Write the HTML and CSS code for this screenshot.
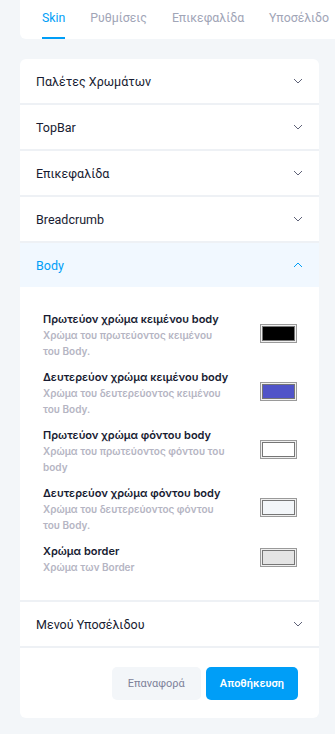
FILE: index.html
```html
<html>
<head>
    <meta charset="utf-8">
    <link rel="stylesheet" href="styles.css">
</head>
<body>
    <div class="tabs">
        <a class="tab active">Skin</a>
        <a class="tab">Ρυθμίσεις</a>
        <a class="tab">Επικεφαλίδα</a>
        <a class="tab">Υποσέλιδο</a>
    </div>

    <div class="panel">
        <div class="accItem">
            <div class="accHead">
                <span>Παλέτες Χρωμάτων</span>
                <svg class="chevron" width="10" height="6" viewBox="0 0 10 6"><path d="M1 1l4 4 4-4" fill="none" stroke="currentColor" stroke-width="1"/></svg>
            </div>
        </div>
        <div class="accItem">
            <div class="accHead">
                <span>TopBar</span>
                <svg class="chevron" width="10" height="6" viewBox="0 0 10 6"><path d="M1 1l4 4 4-4" fill="none" stroke="currentColor" stroke-width="1"/></svg>
            </div>
        </div>
        <div class="accItem">
            <div class="accHead">
                <span>Επικεφαλίδα</span>
                <svg class="chevron" width="10" height="6" viewBox="0 0 10 6"><path d="M1 1l4 4 4-4" fill="none" stroke="currentColor" stroke-width="1"/></svg>
            </div>
        </div>
        <div class="accItem">
            <div class="accHead">
                <span>Breadcrumb</span>
                <svg class="chevron" width="10" height="6" viewBox="0 0 10 6"><path d="M1 1l4 4 4-4" fill="none" stroke="currentColor" stroke-width="1"/></svg>
            </div>
        </div>
        <div class="accItem">
            <div class="accHead open">
                <span>Body</span>
                <svg class="chevron" width="10" height="6" viewBox="0 0 10 6"><path d="M1 5l4-4 4 4" fill="none" stroke="currentColor" stroke-width="1"/></svg>
            </div>
            <div class="accBody">
                <div class="colorRow">
                    <div class="colorText">
                        <div class="colorName">Πρωτεύον χρώμα κειμένου body</div>
                        <div class="colorDesc">Χρώμα του πρωτεύοντος κειμένου του Body.</div>
                    </div>
                    <div class="swatch"><div class="swatchFill fillBlack"></div></div>
                </div>
                <div class="colorRow">
                    <div class="colorText">
                        <div class="colorName">Δευτερεύον χρώμα κειμένου body</div>
                        <div class="colorDesc">Χρώμα του δευτερεύοντος κειμένου του Body.</div>
                    </div>
                    <div class="swatch"><div class="swatchFill fillBlue"></div></div>
                </div>
                <div class="colorRow">
                    <div class="colorText">
                        <div class="colorName">Πρωτεύον χρώμα φόντου body</div>
                        <div class="colorDesc">Χρώμα του πρωτεύοντος φόντου του body</div>
                    </div>
                    <div class="swatch"><div class="swatchFill fillWhite"></div></div>
                </div>
                <div class="colorRow">
                    <div class="colorText">
                        <div class="colorName">Δευτερεύον χρώμα φόντου body</div>
                        <div class="colorDesc">Χρώμα του δευτερεύοντος φόντου του Body.</div>
                    </div>
                    <div class="swatch"><div class="swatchFill fillLight"></div></div>
                </div>
                <div class="colorRow">
                    <div class="colorText">
                        <div class="colorName">Χρώμα border</div>
                        <div class="colorDesc">Χρώμα των Border</div>
                    </div>
                    <div class="swatch"><div class="swatchFill fillGrey"></div></div>
                </div>
            </div>
        </div>
        <div class="accItem">
            <div class="accHead">
                <span>Μενού Υποσέλιδου</span>
                <svg class="chevron" width="10" height="6" viewBox="0 0 10 6"><path d="M1 1l4 4 4-4" fill="none" stroke="currentColor" stroke-width="1"/></svg>
            </div>
        </div>

        <div class="actions">
            <button class="btn btnLight">Επαναφορά</button>
            <button class="btn btnPrimary">Αποθήκευση</button>
        </div>
    </div>
</body>
</html>
```

FILE: styles.css
```css
body {
    margin: 0px;
    background-color: #f3f6f9;
    font-family: Roboto, "Liberation Sans", sans-serif;
    overflow: hidden;
}
.tabs {
    display: flex;
    gap: 25px;
    margin-left: 20px;
    height: 39px;
    padding-left: 22px;
    background-color: #ffffff;
    border-bottom-left-radius: 6px;
    box-sizing: border-box;
    overflow: hidden;
}
.tab {
    font-size: 12.3px;
    line-height: 37px;
    color: #a1a5b7;
    white-space: nowrap;
    border-bottom: 2px solid transparent;
}
.tab.active {
    color: #009ef7;
    border-bottom-color: #009ef7;
}
.panel {
    margin: 20px 16px 0px 20px;
    background-color: #ffffff;
    border-radius: 6px;
    overflow: hidden;
}
.accItem {
    border-bottom: 2px solid #eef1f5;
}
.accHead {
    display: flex;
    align-items: center;
    justify-content: space-between;
    height: 44px;
    padding: 0px 16px;
    font-size: 12.5px;
    color: #181c32;
}
.accHead .chevron {
    color: #5e6278;
}
.accHead.open {
    background-color: #f1f8ff;
    color: #009ef7;
}
.accHead.open .chevron {
    color: #009ef7;
}
.accBody {
    padding: 24px 22px 25px 23px;
}
.colorRow {
    display: flex;
    align-items: center;
    justify-content: space-between;
    margin-bottom: 10px;
}
.colorRow:last-child {
    margin-bottom: 0px;
}
.colorText {
    width: 182px;
}
.colorName {
    font-family: Inter, Roboto, sans-serif;
    font-size: 11px;
    font-weight: 600;
    line-height: 16px;
    color: #181c32;
    white-space: nowrap;
}
.colorDesc {
    font-family: Inter, Roboto, sans-serif;
    font-size: 10px;
    font-weight: 600;
    line-height: 16px;
    color: #b5b5c3;
}
.swatch {
    width: 37px;
    height: 19px;
    box-sizing: border-box;
    border: 1px solid #9a9a9a;
    padding: 1px;
    background-color: #f0f0f0;
    margin-bottom: 4px;
}
.swatchFill {
    height: 100%;
    box-sizing: border-box;
    border: 1px solid #767676;
}
.fillBlack {
    background-color: #000000;
}
.fillBlue {
    background-color: #5054c8;
}
.fillWhite {
    background-color: #ffffff;
}
.fillLight {
    background-color: #f3f6f9;
}
.fillGrey {
    background-color: #e4e4e4;
}
.actions {
    display: flex;
    justify-content: flex-end;
    gap: 5px;
    padding: 19px 21px 18px;
}
.btn {
    height: 33px;
    border: none;
    border-radius: 5px;
    font-family: Roboto, "Liberation Sans", sans-serif;
    font-size: 11px;
    padding: 0px 16px;
}
.btnLight {
    background-color: #f3f6f9;
    color: #7e8299;
}
.btnPrimary {
    background-color: #009ef7;
    color: #ffffff;
    font-weight: 600;
    padding: 0px 14px;
}
```
